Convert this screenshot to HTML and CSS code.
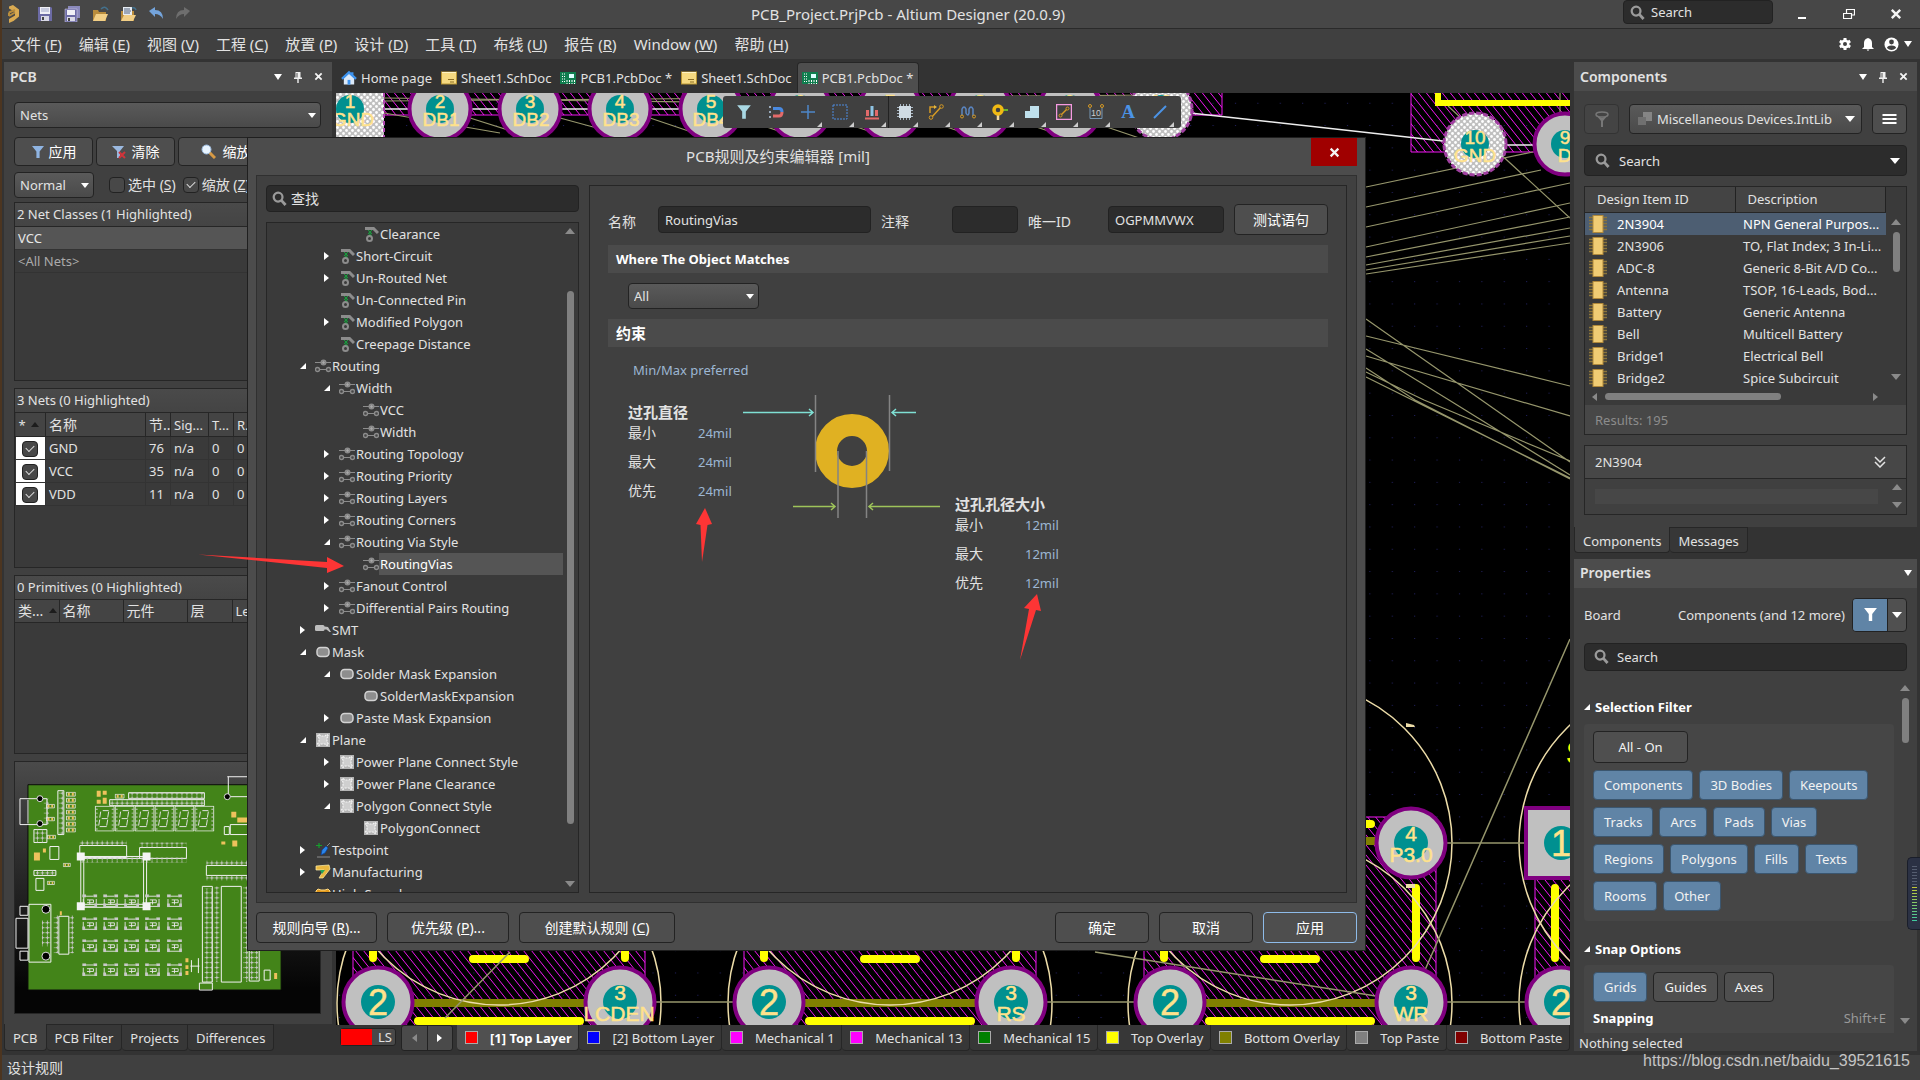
FILE: index.html
```html
<!DOCTYPE html>
<html lang="zh-CN">
<head>
<meta charset="utf-8">
<title>PCB_Project.PrjPcb - Altium Designer (20.0.9)</title>
<link rel="stylesheet" href="styles.css">
</head>
<body>
<svg class="sprite" aria-hidden="true">
  <symbol id="i-search" viewBox="0 0 16 16"><circle cx="6.5" cy="6.5" r="4.7" fill="none" stroke="#9a9a9a" stroke-width="2.4"/><path d="M10 10l4.5 5" stroke="#9a9a9a" stroke-width="3"/></symbol>
  <symbol id="i-funnel" viewBox="0 0 14 14"><path d="M1 1h12L8.600 6.500V13H5.400V6.500z" fill="currentColor"/></symbol>
  <symbol id="i-pin" viewBox="0 0 10 12"><path d="M2.500 1h5v5.500h1.500v1.500H5.700V12H4.300V8H1V6.500h1.500z" fill="#f0f0f0"/><path d="M4 2v4.500" stroke="#555"/></symbol>
  <symbol id="i-x" viewBox="0 0 10 10"><path d="M1.500 1.500l7 7M8.500 1.500l-7 7" stroke="#f4f4f4" stroke-width="2"/></symbol>
  <symbol id="i-clear" viewBox="0 0 16 16"><path d="M2 2.500h8.500L15 7" fill="none" stroke="#8c8c8c" stroke-width="3"/><path d="M5 4l4 4M9 4L5 8M5 7l4 3M9 7l-4 3" stroke="#16a03c" stroke-width="1"/><circle cx="6.500" cy="12.500" r="2.500" fill="none" stroke="#8c8c8c" stroke-width="2"/></symbol>
  <symbol id="i-route" viewBox="0 0 16 16"><path d="M0 4.500h16M2 11.500h12" stroke="#8c8c8c" stroke-width="1.200"/><g fill="#464646" stroke="#8c8c8c" stroke-width="1.400"><circle cx="8.500" cy="4.500" r="2.300"/><circle cx="2.500" cy="11.500" r="2"/><circle cx="13.500" cy="11.500" r="2"/></g><circle cx="8.500" cy="4.500" r="1.500" fill="#aaa"/></symbol>
  <symbol id="i-mask" viewBox="0 0 16 16"><rect x="2" y="3.500" width="12" height="9" rx="3.500" fill="#8e8e8e" stroke="#d2d2d2" stroke-width="1.500"/></symbol>
  <symbol id="i-plane" viewBox="0 0 16 16"><rect x="1" y="1" width="14" height="14" fill="#b4b4b4"/><path d="M4 2.500l2 1.500h4l2-1.500L13.500 4 12 6v4l1.500 2-1.500 1.500-2-1.500H6l-2 1.500L2.500 12 4 10V6L2.500 4z" fill="#cfcfcf" stroke="#f4f4f4" stroke-width="1.200" stroke-dasharray="2 1"/></symbol>
  <symbol id="i-smt" viewBox="0 0 16 16"><path d="M0 4.500q0-1.500 1.500-1.500H8q1.500 0 1.500 1.500L13 5l3 5h-1.500l-3-2.500H9.500q0 1.500-1.500 1.500H1.500Q0 9 0 8z" fill="#bdbdbd"/></symbol>
  <symbol id="i-test" viewBox="0 0 16 16"><path d="M4 1v5M1 3.500h6" stroke="#15a02c" stroke-width="1.200"/><path d="M6 13l1-5 4-4 2 2-3 5z" fill="#2a86ea" stroke="#0b3f9a" stroke-width=".7"/><path d="M2 15h13M12 4l3-3" stroke="#8b8b8b"/></symbol>
  <symbol id="i-manu" viewBox="0 0 16 16"><path d="M1 2l13-1 1 4-7 9H4l5-8H1z" fill="#e8b73f" stroke="#fff0ae" stroke-width=".7"/><path d="M5 6h5l-3 4z" fill="#23a55a"/></symbol>
  <symbol id="i-speed" viewBox="0 0 16 16"><path d="M1 5l2-2 3 1h4l3-1 2 2v8H1z" fill="#e39a1d" stroke="#ffd980"/></symbol>
  <symbol id="i-sch" viewBox="0 0 16 14"><rect x="0.500" y="1" width="15" height="12" fill="#f5d980" stroke="#b79432"/><path d="M1 1.500h14" stroke="#fff3c4"/><path d="M7 8.500h6M9 11h4" stroke="#8b6d22"/></symbol>
  <symbol id="i-pcb" viewBox="0 0 16 14"><rect x="0" y="1" width="16" height="12" fill="#0f7d4e"/><path d="M2 3h3M2 5.500h3M2 8h3M2 10.500h3" stroke="#fff" stroke-dasharray="1 1"/><rect x="9" y="3" width="5" height="4" fill="#dff"/><path d="M7 9v4M9.500 9v4M12 9v4M14.500 9v4" stroke="#fff" stroke-dasharray="2 1"/></symbol>
  <symbol id="i-chip" viewBox="0 0 18 18"><path d="M0 2.500h18M0 5.500h18M0 8.500h18M0 11.500h18M0 14.500h18" stroke="#8b743a" stroke-width="1.500"/><rect x="4" y="0.500" width="10" height="17" fill="#f0cc74" stroke="#b0883a"/></symbol>
  <symbol id="i-menu" viewBox="0 0 14 12"><path d="M0 2h14M0 6h14M0 10h14" stroke="#fff" stroke-width="2"/></symbol>
</svg>

<header class="titlebar">
  <div class="quick">
    <svg width="16" height="20" viewBox="0 0 16 20"><path d="M3 4.500V2.500l4-1.500 6 4.500v7L7.500 17 3 19v-4l6-3.500V8L6.500 6.500z" fill="#d9aa52"/><path d="M3 8.500L9 6M3 12l6-3.500M3 8.500V12" fill="none" stroke="#b98d3c" stroke-width="2"/></svg>
    <svg width="16" height="16" viewBox="0 0 16 16"><path d="M1 1h13l1 1v13H1z" fill="#6c6ba5"/><path d="M3 1h10v7H3z" fill="#f0f0f6"/><path d="M4 10h8v5H4z" fill="#d9d9e6"/><path d="M5 11h2v3H5z" fill="#444"/><path d="M4 3h8M4 5h8" stroke="#9fa6c9"/></svg>
    <svg width="17" height="16" viewBox="0 0 17 16"><path d="M4 0h12v12H4z" fill="#8a89bb"/><path d="M1 3h12v13H1z" fill="#6c6ba5" stroke="#d4d3ee" stroke-width=".5"/><path d="M3 4h8v5H3z" fill="#f0f0f6"/><path d="M3 11h8v4H3z" fill="#d9d9e6"/><path d="M4 12h2v3H4z" fill="#444"/></svg>
    <svg width="17" height="16" viewBox="0 0 17 16"><path d="M1 4h5l1 2h7v9H1z" fill="#b98c3c"/><path d="M4 8h12l-3 7H1z" fill="#f2cf86"/><path d="M9 3q4-4 7 1" fill="none" stroke="#43708c" stroke-width="1.500"/></svg>
    <svg width="17" height="16" viewBox="0 0 17 16"><path d="M1 5h13v10H1z" fill="#b98c3c"/><path d="M3 1h9v8H3z" fill="#e8edf4"/><path d="M4 3h6M4 5h7M4 7h6" stroke="#53637c"/><path d="M4 9h12l-3 6H1z" fill="#f2cf86"/><path d="M12 2q3-1 4 2" fill="none" stroke="#43708c" stroke-width="1.500"/></svg>
    <svg width="16" height="16" viewBox="0 0 16 16"><path d="M1 5l6-4v3q8 0 8 9-3-5-8-5v3z" fill="#74a4dc"/></svg>
    <svg width="16" height="16" viewBox="0 0 16 16"><path d="M15 5L9 1v3Q1 4 1 13q3-5 8-5v3z" fill="#6e6e6e"/></svg>
  </div>
  <h1>PCB_Project.PrjPcb - Altium Designer (20.0.9)</h1>
  <div class="win">
    <label class="field top-search"><svg width="15" height="15"><use href="#i-search"/></svg><input type="text" value="Search" aria-label="Search"></label>
    <button class="bare" aria-label="Minimize"><svg width="12" height="12" viewBox="0 0 12 12"><path d="M2 10h8" stroke="#fff" stroke-width="2"/></svg></button>
    <button class="bare" aria-label="Restore"><svg width="12" height="12" viewBox="0 0 12 12"><path d="M3.500 5V1.500h8V7H8.500M.500 5.500h8v5h-8z" fill="none" stroke="#fff" stroke-width="1.200"/></svg></button>
    <button class="bare" aria-label="Close"><svg width="12" height="12"><use href="#i-x"/></svg></button>
  </div>
</header>

<nav class="menubar">
  <a href="#">文件 (<u>F</u>)</a><a href="#">编辑 (<u>E</u>)</a><a href="#">视图 (<u>V</u>)</a><a href="#">工程 (<u>C</u>)</a><a href="#">放置 (<u>P</u>)</a><a href="#">设计 (<u>D</u>)</a><a href="#">工具 (<u>T</u>)</a><a href="#">布线 (<u>U</u>)</a><a href="#">报告 (<u>R</u>)</a><a href="#">Window (<u>W</u>)</a><a href="#">帮助 (<u>H</u>)</a>
  <div class="account">
    <svg width="14" height="14" viewBox="0 0 14 14"><path d="M7 1v12M1.800 4l10.400 6M12.200 4L1.800 10" stroke="#fff" stroke-width="3"/><circle cx="7" cy="7" r="4.500" fill="#fff"/><circle cx="7" cy="7" r="2" fill="#404040"/></svg>
    <svg width="12" height="14" viewBox="0 0 12 14"><path d="M6 1q4 1 4 5v4l2 2H0l2-2V6q0-4 4-5zM4.500 12.500h3L6 14z" fill="#fff"/></svg>
    <span class="user"><svg width="15" height="15" viewBox="0 0 15 15"><circle cx="7.500" cy="7.500" r="7" fill="#fff"/><circle cx="7.500" cy="5" r="2.400" fill="#404040"/><path d="M3 11q0-2.500 4.500-2.500T12 11q-2 2-4.500 2T3 11z" fill="#404040"/></svg><i class="caret small"></i></span>
  </div>
</nav>

<main class="workspace">
  <aside class="left">
    <section class="panel pcb-panel">
      <header class="panel-head"><h2>PCB</h2><i class="caret small"></i><svg width="10" height="12"><use href="#i-pin"/></svg><svg width="9" height="9"><use href="#i-x"/></svg></header>
      <div class="pcb-body">
        <span class="select"><select aria-label="Mode"><option>Nets</option></select></span>
        <div class="actions zh">
          <button class="btn"><svg class="blue" width="14" height="14"><use href="#i-funnel"/></svg>应用</button>
          <button class="btn"><svg width="16" height="14" viewBox="0 0 16 14"><path d="M0 1h12L8 6v7H5V6z" fill="#9bb9e0"/><path d="M7 7l6 6M13 7l-6 6" stroke="#d0343a" stroke-width="2"/></svg>清除</button>
          <button class="btn wide"><svg width="15" height="15" viewBox="0 0 15 15"><path d="M8 8l6 6" stroke="#d79a45" stroke-width="3"/><circle cx="5.500" cy="5.500" r="4.500" fill="#e8f4ff" stroke="#9bbbe0"/></svg>缩放等级</button>
        </div>
        <div class="options zh">
          <span class="select normal"><select aria-label="Highlight"><option>Normal</option></select></span>
          <label><input type="checkbox"><span>选中 (<u>S</u>)</span></label>
          <label><input type="checkbox" checked><span>缩放 (<u>Z</u>)</span></label>
        </div>
        <section class="box">
          <h3>2 Net Classes (1 Highlighted)</h3>
          <ul class="classes"><li class="on">VCC</li><li>&lt;All Nets&gt;</li></ul>
        </section>
        <section class="box">
          <h3>3 Nets (0 Highlighted)</h3>
          <table class="grid nets">
            <colgroup><col class="c29"><col class="c100"><col class="c25"><col class="c38"><col class="c25"><col></colgroup>
            <thead><tr><th>* <i class="sort"></i></th><th class="zh">名称</th><th class="zh">节..</th><th>Sig...</th><th>T...</th><th>R...</th></tr></thead>
            <tbody>
              <tr><td class="tick"><input type="checkbox" checked aria-label="GND"></td><td>GND</td><td>76</td><td>n/a</td><td>0</td><td>0</td></tr>
              <tr><td class="tick"><input type="checkbox" checked aria-label="VCC"></td><td>VCC</td><td>35</td><td>n/a</td><td>0</td><td>0</td></tr>
              <tr><td class="tick"><input type="checkbox" checked aria-label="VDD"></td><td>VDD</td><td>11</td><td>n/a</td><td>0</td><td>0</td></tr>
            </tbody>
          </table>
        </section>
        <section class="box">
          <h3>0 Primitives (0 Highlighted)</h3>
          <table class="grid zh">
            <colgroup><col class="c44"><col class="c64"><col class="c64"><col class="c45"><col></colgroup>
            <thead><tr><th>类... <i class="sort"></i></th><th>名称</th><th>元件</th><th>层</th><th class="en">Length</th></tr></thead>
          </table>
        </section>
        <div class="box minimap">
          <svg viewBox="15 761 306 252" preserveAspectRatio="xMidYMid slice">
            <defs>
              <pattern id="m-pin" width="5" height="5" patternUnits="userSpaceOnUse"><path d="M2.500 .500v4M.500 2.500h4" stroke="#c9c9c9" stroke-width="1"/></pattern>
              <symbol id="m-key" viewBox="0 0 16 14"><path d="M1 5v8h14V5M4 2h8M5 6h7v3H5M8 6v5" fill="none" stroke="#e6e6e6"/><path d="M0 0h4v3H0zM12 0h4v3h-4zM0 10h3v4H0zM13 10h3v4h-3z" fill="#c9c9c9"/></symbol>
              <symbol id="m-seg" viewBox="0 0 20 26"><path d="M.500 .500h19v25H.500z" fill="none" stroke="#f2f2f2"/><path d="M8 5h6M7 13h6M5 21h7M6 6l-1 6M14 6l-1 6M5 14l-1 6M13 14l-1 6" stroke="#e2e2e2" fill="none"/><path d="M2 3v21M18 3v21" stroke="#c9c9c9" stroke-dasharray="1 3" stroke-width="2"/></symbol>
              <symbol id="m-res" viewBox="0 0 10 5"><path d="M.500 .500h9v4h-9z" fill="none" stroke="#e6e6e6"/><path d="M2 1h2v3H2zM6 1h2v3H6z" fill="#eec25c"/></symbol>
            </defs>
            <path d="M28 784h254v206H28z" fill="#438419" stroke="#0a0a0a"/>
            <g fill="none" stroke="#f2f2f2" stroke-width="1">
              <path d="M36 798H20v26M20 824h16M28 799v24M36 798h11v26H36M228 776h40v60M229 776v20h40"/>
              <path d="M20 906h8v9h-8zM16 918h12v30H16zM20 951h8v9h-8zM29 904h22v58H29zM59 916h10v38H59zM58 790h6v44h-6z" />
              <path d="M80 845h47v12H80zM140 847h47v11h-47zM207 865h45v10h-45zM36 878h8v12h-8zM50 846h9v13h-9zM34 829h13v13H34zM34 870h22v5H34z"/>
              <path d="M81 856h66v51H81zM84 858h60v46H84zM203 886h10v96h-10zM222 886h20v96h-20zM250 886h10v95h-10zM200 983h13v7h-13zM129 792h76v6h-76zM110 799h95v6h-95zM231 824h30v10h-30zM225 826h5v8h-5z"/>
              <path d="M192 960v12M199 958v15M191 966h9M265 970h6v10h-6z"/>
            </g>
            <g fill="url(#m-pin)"><path d="M59 790h5v44h-5zM129 792h76v6h-76zM110 799h95v6h-95zM80 840h47v5H80zM80 857h60v5H80zM140 842h47v5h-47zM140 857h47v5h-47zM207 860h45v5h-45zM207 875h45v5h-45zM205 888h8v94h-8zM215 886h5v96h-5zM244 886h5v96h-5zM251 886h8v94h-8zM54 915h5v38h-5zM69 915h5v38h-5zM42 920h9v26h-9zM34 829h13v13H34zM36 870h20v5H36zM44 798h5v26h-5z"/></g>
            <g fill="#eec25c"><path d="M97 790h4v6h-4zM103 790h4v4h-4zM97 799h4v4h-4zM103 797h4v6h-4zM34 852h6v8h-6zM43 848h3v4h-3zM232 811h5v6h-5zM238 817h10v5h-10zM186 958h3v4h-3zM186 965h3v4h-3zM186 971h3v4h-3zM275 973h3v6h-3zM222 841h4v3h-4zM233 840h5v6h-5zM60 911h2v4h-2z"/></g>
            <g><use href="#m-res" x="66" y="791" width="10" height="5"/><use href="#m-res" x="66" y="797" width="10" height="5"/><use href="#m-res" x="66" y="803" width="10" height="5"/><use href="#m-res" x="66" y="809" width="10" height="5"/><use href="#m-res" x="66" y="815" width="10" height="5"/><use href="#m-res" x="66" y="821" width="10" height="5"/><use href="#m-res" x="66" y="827" width="10" height="5"/><use href="#m-res" x="115" y="793" width="10" height="5"/><use href="#m-res" x="46" y="803" width="9" height="5"/><use href="#m-res" x="46" y="816" width="9" height="5"/><use href="#m-res" x="47" y="834" width="9" height="5"/><use href="#m-res" x="47" y="880" width="8" height="5"/><use href="#m-res" x="63" y="862" width="8" height="5"/></g>
            <g><use href="#m-seg" x="95" y="805" width="20" height="26"/><use href="#m-seg" x="115" y="805" width="20" height="26"/><use href="#m-seg" x="135" y="805" width="20" height="26"/><use href="#m-seg" x="155" y="805" width="20" height="26"/><use href="#m-seg" x="175" y="805" width="20" height="26"/><use href="#m-seg" x="195" y="805" width="20" height="26"/></g>
            <g id="m-row"><use href="#m-key" x="82" y="894" width="16" height="13"/><use href="#m-key" x="103" y="894" width="16" height="13"/><use href="#m-key" x="124" y="894" width="16" height="13"/><use href="#m-key" x="145" y="894" width="16" height="13"/><use href="#m-key" x="167" y="894" width="16" height="13"/></g>
            <use href="#m-row" y="23"/><use href="#m-row" y="45"/><use href="#m-row" y="69"/>
            <path d="M77 852h8v8h-8zM143 852h8v8h-8zM77 902h8v8h-8zM143 902h8v8h-8z" fill="#f4f4f4"/>
            <g fill="#000" stroke="#ddd"><circle cx="40" cy="798" r="3"/><circle cx="40" cy="823" r="3"/><circle cx="46" cy="909" r="4"/><circle cx="46" cy="956" r="4"/><circle cx="228" cy="796" r="3"/></g>
          </svg>
        </div>
      </div>
    </section>
    <nav class="tabs"><a class="on" href="#">PCB</a><a href="#">PCB Filter</a><a href="#">Projects</a><a href="#">Differences</a></nav>
  </aside>

  <section class="center">
    <nav class="docs">
      <a href="#"><svg width="16" height="16" viewBox="0 0 17 16"><path d="M3 8v7h11V8L8.500 3z" fill="#dce9f8"/><path d="M1 9l7.500-7L16 9M12 2v3" fill="none" stroke="#3d93ee" stroke-width="2.500"/><path d="M7 10h3v5H7z" fill="#3d93ee"/></svg>Home page</a>
      <a href="#"><svg width="16" height="14"><use href="#i-sch"/></svg>Sheet1.SchDoc</a>
      <a href="#"><svg width="16" height="14"><use href="#i-pcb"/></svg>PCB1.PcbDoc *</a>
      <a href="#"><svg width="16" height="14"><use href="#i-sch"/></svg>Sheet1.SchDoc</a>
      <a href="#" class="on"><svg width="16" height="14"><use href="#i-pcb"/></svg>PCB1.PcbDoc *</a>
    </nav>
    <div class="canvas">
      <svg class="board" viewBox="336 93 1234 932" preserveAspectRatio="xMinYMin slice">
        <defs>
          <pattern id="hatch" width="8" height="10" patternUnits="userSpaceOnUse"><path d="M-1 -1.250L9 11.250M-5 3.750L1 11.250M7 -1.250L13 6.250" stroke="#f016f0" stroke-width="1"/></pattern>
          <pattern id="dots" width="22.400" height="22.300" patternUnits="userSpaceOnUse"><path d="M3 14h1" stroke="#24246a"/></pattern>
          <pattern id="check" width="6" height="6" patternUnits="userSpaceOnUse"><path d="M0 0h6v6H0z" fill="#c0c0c0"/><circle cx="1.500" cy="1.500" r="1.400" fill="#fff"/><circle cx="4.500" cy="4.500" r="1.400" fill="#fff"/></pattern>
          <g id="pad"><circle r="30.500" fill="#c0c0c0" stroke="#800080" stroke-width="4"/><circle r="14" fill="#009090"/></g>
          <g id="padc"><circle r="31" fill="url(#check)" stroke="#a040a0" stroke-width="3" stroke-dasharray="5 2"/><circle r="14" fill="#009090"/></g>
          <g id="padb"><circle r="34.500" fill="#c0c0c0" stroke="#800080" stroke-width="4"/><circle r="17" fill="#009090"/></g>
          <g id="module">
            <path d="M-146 817h292v220h-292z" fill="url(#hatch)" stroke="#f016f0"/>
            <path d="M-85 1003H85M-85 841H85" stroke="#808000" stroke-width="8" stroke-linecap="round"/>
            <path d="M-81 1021H81M-81 824H81M-26 959h52M-126 888v70M126 888v70" stroke="#ff0" stroke-width="8" stroke-linecap="round"/>
            <g fill="none" stroke="#ecdca8" stroke-width="1.500"><circle cy="843" r="162"/><circle cy="1003" r="162"/></g>
          </g>
        </defs>
        <path d="M336 93h1234v932H336z" fill="#000"/><path d="M336 93h1234v932H336z" fill="url(#dots)"/>
        <path d="M384 80h838v35H384zM1411 80h200v72h-200z" fill="url(#hatch)" stroke="#f016f0"/>
        <g stroke="#96966c" stroke-width="1.200" fill="none">
          <path d="M384 98L1150 108M384 101L1150 95M384 113L500 133M470 118L530 137M560 118L630 137M650 118l80 27M740 118l80 27M830 118l80 27M920 118l80 27M1010 118l80 27M1080 118l80 27"/>
          <path d="M1366 187L1533 152M1366 207L1541 170M1366 227L1570 183M1366 247L1570 203M1366 257L1570 217M1366 265L1570 228M1366 270L1570 236M1366 274L1570 243M1448 106L1570 218M1560 93v20"/>
          <path d="M1366 319L1570 462M1366 336L1570 386M1366 356L1570 416M1366 349L1449 400 1570 475M1366 368L1415 400 1570 479M1366 372L1424 400 1570 461M1366 377L1570 478"/>
        </g>
        <path d="M384 109H760M1190 113L1443 141M1507 145h30" stroke="#eee" stroke-width="1.500"/>
        <path d="M1438 93v10h132" fill="none" stroke="#ff0" stroke-width="6"/>
        <path d="M336 93h48v50h-48z" fill="url(#check)"/><path d="M384 93v50" stroke="#b04ab0" stroke-width="2" stroke-dasharray="4 3"/><circle cx="350" cy="109" r="14" fill="#009090"/>
        <use href="#pad" x="440" y="109"/><use href="#pad" x="530" y="109"/><use href="#pad" x="620" y="109"/><use href="#pad" x="711" y="109"/><use href="#pad" x="800" y="109"/><use href="#pad" x="890" y="109"/><use href="#pad" x="980" y="109"/><use href="#pad" x="1070" y="109"/><use href="#padc" x="1161" y="109"/><use href="#padc" x="1475" y="144"/><use href="#pad" x="1565" y="144"/>
        <g class="pad-s"><text x="350" y="108">1</text><text x="353" y="126">GND</text><text x="440" y="108">2</text><text x="441" y="126">DB1</text><text x="530" y="108">3</text><text x="531" y="126">DB2</text><text x="620" y="108">4</text><text x="621" y="126">DB3</text><text x="711" y="108">5</text><text x="711" y="126">DB4</text><text x="800" y="108">6</text><text x="890" y="108">7</text><text x="980" y="108">8</text><text x="1070" y="108">9</text><text x="1161" y="108">10</text><text x="1475" y="144">10</text><text x="1475" y="162">GND</text><text x="1565" y="144">9</text><text x="1570" y="162">D7</text></g>
        <use href="#module" x="499"/><use href="#module" x="890"/><use href="#module" x="1290"/><use href="#module" x="1681"/>
        <g stroke="#96966c" stroke-width="1.500" fill="none"><path d="M1570 639L1425 970M1095 952L1376 996M510 952L445 1018M654 1002h80M1045 1002h90M1445 1002h82M1445 843h82"/></g>
        <path d="M1406 723l8 2 1 2h-9zM1406 884h9v4h-9z" fill="#ecdca8"/>
        <use href="#padb" x="378" y="1002"/><use href="#padb" x="620" y="1002"/><use href="#padb" x="769" y="1002"/><use href="#padb" x="1011" y="1002"/><use href="#padb" x="1170" y="1002"/><use href="#padb" x="1411" y="1002"/><use href="#padb" x="1561" y="1002"/><use href="#padb" x="1411" y="843"/>
        <path d="M1526 808h70v70h-70z" fill="#c0c0c0" stroke="#800080" stroke-width="4"/><circle cx="1561" cy="843" r="17" fill="#009090"/>
        <g class="pad-l"><text x="378" y="1015">2</text><text x="769" y="1015">2</text><text x="1170" y="1015">2</text><text x="1561" y="1015">2</text><text x="1561" y="856">1</text></g>
        <g class="pad-m"><text x="620" y="1000">3</text><text x="619" y="1021">LCDEN</text><text x="1011" y="1000">3</text><text x="1011" y="1021">RS</text><text x="1411" y="1000">3</text><text x="1411" y="1021">WR</text><text x="1411" y="841">4</text><text x="1411" y="862">P3.0</text></g>
        <text class="pad-y" x="1566" y="764">S</text>
      </svg>
      <div class="tools" role="toolbar">
        <button><svg class="ice" viewBox="0 0 16 16"><use href="#i-funnel"/></svg></button>
        <button><svg viewBox="0 0 16 16"><path d="M1 3h2M1 8h2M1 13h2" stroke="#9ab" stroke-width="2"/><path d="M5 4.500h6q3 0 3 3.500" stroke="#4a8ae0" stroke-width="3" fill="none"/><path d="M14 8q0 4-3 4H5" stroke="#e26a6a" stroke-width="3" fill="none"/></svg></button>
        <button class="more"><svg viewBox="0 0 16 16"><path d="M8 1v14M1 8h14" stroke="#4d86c8" stroke-width="1.500"/></svg></button>
        <button class="more"><svg viewBox="0 0 16 16"><path d="M1 1h14v14H1z" fill="none" stroke="#4d8be0" stroke-dasharray="2 1"/></svg></button>
        <button class="more"><svg viewBox="0 0 16 16"><path d="M2 6h3v6H2zM11 6h3v6h-3z" fill="#e26a6a"/><path d="M6.500 2h3v10h-3z" fill="#8fc4e4"/><path d="M1 14.500h14" stroke="#e26a6a" stroke-width="2"/></svg></button>
        <button class="more bar"><svg viewBox="0 0 16 16"><path d="M0 3.500h16M0 6.500h16M0 9.500h16M0 12.500h16M3.500 0v16M6.500 0v16M9.500 0v16M12.500 0v16" stroke="#a9b7c3"/><path d="M2 2h12v12H2z" fill="#cfdbe4"/></svg></button>
        <button class="more"><svg viewBox="0 0 16 16"><path d="M2 9V3h5M3 14L13 3" fill="none" stroke="#d59a25" stroke-width="1.500"/><path d="M6 1l3 2-3 2z" fill="#e6b63c"/><circle cx="3" cy="13.500" r="1.800" fill="#404040" stroke="#d59a25"/><circle cx="13.500" cy="2.500" r="1.800" fill="#404040" stroke="#d59a25"/></svg></button>
        <button class="more"><svg viewBox="0 0 16 16"><path d="M2 12V5q2-4 4 0v4q2 4 3 0V5q2-4 4 0v7" fill="none" stroke="#5b86c2" stroke-width="1.500"/><circle cx="2" cy="12.500" r="1.500" fill="#404040" stroke="#d59a25"/><circle cx="14" cy="12.500" r="1.500" fill="#404040" stroke="#d59a25"/></svg></button>
        <button class="more"><svg viewBox="0 0 16 16"><path d="M10 6h6" stroke="#69b52c" stroke-width="2"/><path d="M6 10v6" stroke="#f3d9a0" stroke-width="2.500"/><circle cx="6" cy="6" r="4" fill="#404040" stroke="#f0b913" stroke-width="3.500"/></svg></button>
        <button class="more"><svg viewBox="0 0 16 16"><path d="M1 7h5V2h9v12H1z" fill="#bfe0ec"/></svg></button>
        <button class="more"><svg viewBox="0 0 16 16"><path d="M.500 .500h15v15H.500z" fill="none" stroke="#f59ae0" stroke-width="1.500"/><path d="M4 12l8-8" stroke="#d59a25" stroke-width="1.500"/><circle cx="4.500" cy="11.500" r="1.500" fill="#404040" stroke="#d59a25"/><circle cx="11.500" cy="4.500" r="1.500" fill="#404040" stroke="#d59a25"/></svg></button>
        <button class="more"><svg viewBox="0 0 16 16"><path d="M2 4v10.500h12V4" fill="none" stroke="#7596b4"/><circle cx="2" cy="2" r="1.500" fill="none" stroke="#d59a25"/><circle cx="14" cy="2" r="1.500" fill="none" stroke="#d59a25"/><text x="8" y="12" class="ten">10</text></svg></button>
        <button><span class="letter">A</span></button>
        <button class="more"><svg viewBox="0 0 16 16"><path d="M2 14L14 2" stroke="#4b93e6" stroke-width="2"/></svg></button>
      </div>
    </div>
    <nav class="layers">
      <button class="ls"><i></i>LS</button>
      <span class="steps"><button aria-label="Previous"><i class="arrow back"></i></button><button aria-label="Next"><i class="arrow"></i></button></span>
      <a href="#" class="on"><i class="sw red"></i>[1] Top Layer</a>
      <a href="#"><i class="sw blu"></i>[2] Bottom Layer</a>
      <a href="#"><i class="sw mag"></i>Mechanical 1</a>
      <a href="#"><i class="sw mag"></i>Mechanical 13</a>
      <a href="#"><i class="sw grn"></i>Mechanical 15</a>
      <a href="#"><i class="sw yel"></i>Top Overlay</a>
      <a href="#"><i class="sw olv"></i>Bottom Overlay</a>
      <a href="#"><i class="sw gry"></i>Top Paste</a>
      <a href="#"><i class="sw mar"></i>Bottom Paste</a>
    </nav>
  </section>

  <aside class="right">
    <section class="panel">
      <header class="panel-head"><h2>Components</h2><i class="caret small"></i><svg width="10" height="12"><use href="#i-pin"/></svg><svg width="9" height="9"><use href="#i-x"/></svg></header>
      <div class="comp-body">
        <div class="lib">
          <button class="btn dim" aria-label="Filter"><svg width="16" height="16" viewBox="0 0 16 16"><ellipse cx="8" cy="3.500" rx="6" ry="2.500" fill="none" stroke="#777" stroke-width="1.500"/><path d="M2 4l5 6v6h2v-6l5-6-6 3z" fill="#777"/></svg></button>
          <span class="select lib-select"><svg width="14" height="14" viewBox="0 0 14 14"><path d="M5 0h9v9H5z" fill="#858585"/><path d="M0 5h8v8H0z" fill="#707070"/></svg><select aria-label="Library"><option>Miscellaneous Devices.IntLib</option></select></span>
          <button class="btn" aria-label="Menu"><svg width="15" height="12"><use href="#i-menu"/></svg></button>
        </div>
        <label class="field big"><svg width="15" height="15"><use href="#i-search"/></svg><input type="text" value="Search" aria-label="Search components"><i class="caret"></i></label>
        <div class="list">
          <table class="parts">
            <colgroup><col class="c150"><col></colgroup>
            <thead><tr><th>Design Item ID</th><th>Description</th></tr></thead>
            <tbody>
              <tr class="on"><td><svg><use href="#i-chip"/></svg>2N3904</td><td>NPN General Purpos...</td></tr>
              <tr><td><svg><use href="#i-chip"/></svg>2N3906</td><td>TO, Flat Index; 3 In-Li...</td></tr>
              <tr><td><svg><use href="#i-chip"/></svg>ADC-8</td><td>Generic 8-Bit A/D Co...</td></tr>
              <tr><td><svg><use href="#i-chip"/></svg>Antenna</td><td>TSOP, 16-Leads, Bod...</td></tr>
              <tr><td><svg><use href="#i-chip"/></svg>Battery</td><td>Generic Antenna</td></tr>
              <tr><td><svg><use href="#i-chip"/></svg>Bell</td><td>Multicell Battery</td></tr>
              <tr><td><svg><use href="#i-chip"/></svg>Bridge1</td><td>Electrical Bell</td></tr>
              <tr><td><svg><use href="#i-chip"/></svg>Bridge2</td><td>Spice Subcircuit</td></tr>
            </tbody>
          </table>
          <div class="vbar"><i class="up"></i><b></b><i class="down"></i></div>
          <div class="hbar"><i class="arrow back"></i><b></b><i class="arrow"></i></div>
        </div>
        <p class="results">Results: 195</p>
        <div class="detail">
          <p>2N3904<svg width="12" height="12" viewBox="0 0 12 12"><path d="M1 1l5 5 5-5M1 6l5 5 5-5" fill="none" stroke="#e4e4e4" stroke-width="1.500"/></svg></p>
          <div class="preview"><b></b><span><i class="up"></i><i class="down"></i></span></div>
        </div>
      </div>
    </section>
    <nav class="tabs"><a class="on" href="#">Components</a><a href="#">Messages</a></nav>
    <section class="panel props">
      <header class="panel-head"><h2>Properties</h2><i class="caret small"></i></header>
      <div class="props-body">
        <div class="board-row"><span>Board</span><span>Components (and 12 more)</span><div class="split"><button aria-label="Filter"><svg width="15" height="15"><use href="#i-funnel"/></svg></button><button aria-label="More"><i class="caret"></i></button></div></div>
        <label class="field"><svg width="15" height="15"><use href="#i-search"/></svg><input type="text" value="Search" aria-label="Search properties"></label>
        <div class="scroll">
          <div class="groups">
            <h3><i class="open"></i>Selection Filter</h3>
            <div class="group">
              <div><button class="chip off allon">All - On</button></div>
              <div><button class="chip">Components</button><button class="chip">3D Bodies</button><button class="chip">Keepouts</button></div>
              <div><button class="chip">Tracks</button><button class="chip">Arcs</button><button class="chip">Pads</button><button class="chip">Vias</button></div>
              <div><button class="chip">Regions</button><button class="chip">Polygons</button><button class="chip">Fills</button><button class="chip">Texts</button></div>
              <div><button class="chip">Rooms</button><button class="chip">Other</button></div>
            </div>
            <h3 class="snap"><i class="open"></i>Snap Options</h3>
            <div class="group last">
              <div><button class="chip">Grids</button><button class="chip off">Guides</button><button class="chip off">Axes</button></div>
              <p><b>Snapping</b><span>Shift+E</span></p>
            </div>
          </div>
          <div class="vbar"><i class="up"></i><b></b><i class="down"></i></div>
        </div>
        <p class="nothing">Nothing selected</p>
      </div>
    </section>
  </aside>
</main>

<footer class="status zh">设计规则</footer>

<div class="dialog" role="dialog" aria-labelledby="dlg-title">
  <header><h2 id="dlg-title">PCB规则及约束编辑器 [mil]</h2><button class="close" aria-label="Close"><svg width="11" height="11"><use href="#i-x"/></svg></button></header>
  <div class="dialog-main">
    <div class="tree-col">
      <label class="field zh"><svg width="15" height="15"><use href="#i-search"/></svg><input type="text" value="查找" aria-label="查找"></label>
      <div class="tree-box">
        <ul class="tree">
          <li class="l3"><i></i><svg><use href="#i-clear"/></svg><span>Clearance</span></li>
          <li class="l2"><i class="arrow"></i><svg><use href="#i-clear"/></svg><span>Short-Circuit</span></li>
          <li class="l2"><i class="arrow"></i><svg><use href="#i-clear"/></svg><span>Un-Routed Net</span></li>
          <li class="l2"><i></i><svg><use href="#i-clear"/></svg><span>Un-Connected Pin</span></li>
          <li class="l2"><i class="arrow"></i><svg><use href="#i-clear"/></svg><span>Modified Polygon</span></li>
          <li class="l2"><i></i><svg><use href="#i-clear"/></svg><span>Creepage Distance</span></li>
          <li class="l1"><i class="open"></i><svg><use href="#i-route"/></svg><span>Routing</span></li>
          <li class="l2"><i class="open"></i><svg><use href="#i-route"/></svg><span>Width</span></li>
          <li class="l3"><i></i><svg><use href="#i-route"/></svg><span>VCC</span></li>
          <li class="l3"><i></i><svg><use href="#i-route"/></svg><span>Width</span></li>
          <li class="l2"><i class="arrow"></i><svg><use href="#i-route"/></svg><span>Routing Topology</span></li>
          <li class="l2"><i class="arrow"></i><svg><use href="#i-route"/></svg><span>Routing Priority</span></li>
          <li class="l2"><i class="arrow"></i><svg><use href="#i-route"/></svg><span>Routing Layers</span></li>
          <li class="l2"><i class="arrow"></i><svg><use href="#i-route"/></svg><span>Routing Corners</span></li>
          <li class="l2"><i class="open"></i><svg><use href="#i-route"/></svg><span>Routing Via Style</span></li>
          <li class="l3 on"><i></i><svg><use href="#i-route"/></svg><span>RoutingVias</span></li>
          <li class="l2"><i class="arrow"></i><svg><use href="#i-route"/></svg><span>Fanout Control</span></li>
          <li class="l2"><i class="arrow"></i><svg><use href="#i-route"/></svg><span>Differential Pairs Routing</span></li>
          <li class="l1"><i class="arrow"></i><svg><use href="#i-smt"/></svg><span>SMT</span></li>
          <li class="l1"><i class="open"></i><svg><use href="#i-mask"/></svg><span>Mask</span></li>
          <li class="l2"><i class="open"></i><svg><use href="#i-mask"/></svg><span>Solder Mask Expansion</span></li>
          <li class="l3"><i></i><svg><use href="#i-mask"/></svg><span>SolderMaskExpansion</span></li>
          <li class="l2"><i class="arrow"></i><svg><use href="#i-mask"/></svg><span>Paste Mask Expansion</span></li>
          <li class="l1"><i class="open"></i><svg><use href="#i-plane"/></svg><span>Plane</span></li>
          <li class="l2"><i class="arrow"></i><svg><use href="#i-plane"/></svg><span>Power Plane Connect Style</span></li>
          <li class="l2"><i class="arrow"></i><svg><use href="#i-plane"/></svg><span>Power Plane Clearance</span></li>
          <li class="l2"><i class="open"></i><svg><use href="#i-plane"/></svg><span>Polygon Connect Style</span></li>
          <li class="l3"><i></i><svg><use href="#i-plane"/></svg><span>PolygonConnect</span></li>
          <li class="l1"><i class="arrow"></i><svg><use href="#i-test"/></svg><span>Testpoint</span></li>
          <li class="l1"><i class="arrow"></i><svg><use href="#i-manu"/></svg><span>Manufacturing</span></li>
          <li class="l1"><i></i><svg><use href="#i-speed"/></svg><span>High Speed</span></li>
        </ul>
        <div class="vbar"><i class="up"></i><b></b><i class="down"></i></div>
      </div>
    </div>
    <div class="rule">
      <div class="rule-row">
        <label class="zh w50" for="r-name">名称</label><input class="w213" id="r-name" type="text" value="RoutingVias">
        <label class="zh w81" for="r-note">注释</label><input class="w66" id="r-note" type="text">
        <label class="zh w90" for="r-id">唯一ID</label><input class="w116" id="r-id" type="text" value="OGPMMVWX">
        <button class="btn zh test">测试语句</button>
      </div>
      <h3>Where The Object Matches</h3>
      <span class="select all"><select aria-label="Scope"><option>All</option></select></span>
      <h3 class="zh">约束</h3>
      <div class="constraint">
        <a class="pref" href="#">Min/Max preferred</a>
        <div class="via">
          <dl class="zh dia"><dt class="cap">过孔直径</dt><dt>最小</dt><dd>24mil</dd><dt>最大</dt><dd>24mil</dd><dt>优先</dt><dd>24mil</dd></dl>
          <svg width="200" height="130" viewBox="741 390 200 130">
            <circle cx="851" cy="450" r="26" fill="none" stroke="#e0b122" stroke-width="22"/>
            <path d="M814.500 394v77M888.500 394v76M837 450v67M865.500 450v67" stroke="#848484" stroke-width="1.500"/>
            <path d="M742 411.500h70M808 408l4 3.500-4 3.500M915 411.500h-24M895 408l-4 3.500 4 3.500" fill="none" stroke="#7fe0d4" stroke-width="1.500"/>
            <path d="M792 505.500h42M830 502l4 3.500-4 3.500M939 505.500h-71M872 502l-4 3.500 4 3.500" fill="none" stroke="#9ec45a" stroke-width="1.500"/>
          </svg>
          <dl class="zh hole"><dt class="cap">过孔孔径大小</dt><dt>最小</dt><dd>12mil</dd><dt>最大</dt><dd>12mil</dd><dt>优先</dt><dd>12mil</dd></dl>
        </div>
      </div>
    </div>
  </div>
  <footer class="zh">
    <button class="btn w121">规则向导 (<u>R</u>)...</button><button class="btn w122">优先级 (<u>P</u>)...</button><button class="btn w156">创建默认规则 (<u>C</u>)</button>
    <span class="push"></span>
    <button class="btn w94">确定</button><button class="btn w94">取消</button><button class="btn w94 primary">应用</button>
  </footer>
</div>

<svg class="marks" viewBox="0 0 1920 1080" preserveAspectRatio="xMinYMin meet" aria-hidden="true"><path d="M198 554.500L327 562v-5l17 9-17 7v-5zM705 508l7 16-4.500 1-5.500 37-1.500-37-4.500-1zM1037 594l4 17-5-1-16 50 9-51-5-1z" fill="#fd3535"/></svg>
<div class="meter"><b></b></div>
<a class="watermark" href="#">https://blog.csdn.net/baidu_39521615</a>
</body>
</html>
```
FILE: styles.css
```css
:root {
  --ui: "Noto Sans", "Noto Sans CJK SC", sans-serif;
  --edge: #262626;
  --panel: #404040;
  --head: #4c4c4c;
  --list: #3a3a3a;
  --field: #2c2c2c;
  --blue: #6084a6;
}
* { box-sizing: border-box; }
body {
  margin: 0;
  display: grid;
  grid-template-rows: 29px 30px minmax(0, 1fr) 25px;
  height: 100vh;
  overflow: hidden;
  position: relative;
  background: #333;
  border-left: 2px solid #4c3520;
  color: #e2e2e2;
  font: 13px/18px var(--ui);
}
h1, h2, h3, p, ul, dl, dd { margin: 0; padding: 0; font-size: 13px; font-weight: 400; }
ul { list-style: none; }
a { color: inherit; text-decoration: none; }
button, input, select { font: inherit; color: inherit; margin: 0; padding: 0; border: 0; background: none; }
svg { flex: none; display: block; }
.sprite { position: absolute; width: 0; height: 0; }
.zh { font-size: 14px; }
.zh .en { font-size: 13px; }

/* small triangles */
.caret, .up, .down, .sort { display: block; flex: none; width: 0; height: 0; border: solid transparent; border-width: 6px 5px 0; border-top-color: #fff; }
.caret.small { border-width: 6px 4px 0; }
.down { border-top-color: #8a8a8a; }
.up { border-width: 0 5px 6px; border-bottom-color: #8a8a8a; }
.sort { display: inline-block; border-width: 0 4px 5px; border-bottom-color: #1c1c1c; margin: 0 0 3px 2px; }
.arrow { display: block; border: solid transparent; border-width: 4px 0 4px 5px; border-left-color: #fff; width: 0; height: 0; }
.arrow.back { border-width: 4px 5px 4px 0; border-right-color: #8a8a8a; }
.open { display: block; width: 0; height: 0; border: solid transparent; border-width: 0 0 6px 6px; border-bottom-color: #fff; }

/* title and menu bars */
.titlebar { display: grid; grid-template-columns: 1fr auto 1fr; background: #474747; border-bottom: 1px solid #2a2a2a; align-items: start; }
.quick { display: flex; align-items: center; gap: 11px; height: 28px; padding-left: 4px; }
.quick svg:first-child { margin-right: 4px; }
.titlebar h1 { font-size: 15px; line-height: 28px; margin-right: 106px; }
.win { display: flex; justify-content: flex-end; align-items: center; padding-right: 18px; gap: 35px; }
.win .bare { padding: 8px 0 4px; }
.field { display: flex; align-items: center; gap: 6px; height: 27px; padding: 0 6px; background: var(--field); border: 1px solid #222; border-radius: 4px; }
.field.zh { gap: 4px; padding-left: 5px; }
.field input { flex: 1; min-width: 0; outline: 0; }
.top-search { width: 150px; height: 24px; margin-right: -12px; }
.menubar { display: flex; background: var(--panel); font-size: 15px; line-height: 30px; padding-left: 9px; gap: 17px; }
.account { margin-left: auto; display: flex; align-items: center; gap: 10px; padding-right: 8px; }
.user { display: flex; align-items: center; gap: 5px; }

/* workspace */
.workspace { display: grid; grid-template-columns: 328px minmax(0, 1fr) 343px; gap: 4px; padding: 3px 3px 4px 2px; min-height: 0; }
.left, .right, .center { display: flex; flex-direction: column; min-height: 0; }
.panel { background: var(--panel); display: flex; flex-direction: column; min-height: 0; }
.panel-head { display: flex; align-items: center; gap: 11px; height: 29px; flex: none; padding: 0 9px 0 6px; background: var(--head); }
.panel-head h2 { flex: 1; font-size: 14px; font-weight: 600; }
.props .panel-head { padding-right: 5px; }
.tabs { display: flex; height: 27px; flex: none; }
.tabs a { padding: 4px 8px; border: 1px solid var(--edge); border-left-width: 0; border-radius: 0 0 4px 4px; background: #373737; }
.tabs a.on { background: var(--panel); border-top: 0; border-left-width: 1px; padding-top: 5px; }

.btn { display: flex; align-items: center; justify-content: center; gap: 4px; background: #4e4e4e; border: 1px solid #232323; border-radius: 4px; color: #fff; }
.select { position: relative; display: flex; align-items: center; height: 26px; border: 1px solid #232323; border-radius: 4px; background: linear-gradient(#5a5a5a, #4a4a4a); }
.select select { appearance: none; width: 100%; height: 100%; padding-left: 5px; outline: 0; font-size: 13px; }
.select::after { content: ""; position: absolute; right: 4px; border: solid transparent; border-width: 5px 4px 0; border-top-color: #fff; pointer-events: none; }
input[type="checkbox"] { appearance: none; display: inline-grid; place-items: center; width: 16px; height: 16px; border: 1px solid #222; border-radius: 4px; background: #484848; }
input[type="checkbox"]:checked::before { content: ""; width: 7px; height: 4px; border: solid #ddd; border-width: 0 0 1px 1px; transform: rotate(-45deg); margin-bottom: 3px; }

.pcb-panel { flex: 1; }
.pcb-body { flex: 1; display: flex; flex-direction: column; padding: 11px 11px 10px 10px; min-height: 0; }
.actions { display: flex; gap: 3px; margin: 9px 0 6px; }
.actions .btn { width: 79px; height: 29px; }
.actions .wide { width: 123px; gap: 7px; }
.blue { color: #8fb4e2; }
.options { display: flex; align-items: center; height: 26px; margin-bottom: 4px; }
.options label { display: flex; align-items: center; gap: 3px; white-space: nowrap; margin-right: 7px; }
.normal { width: 80px; margin-right: 15px; }
.box { flex: 179 1 0; min-height: 0; overflow: hidden; border: 1px solid var(--edge); background: var(--list); margin-bottom: 7px; }
.box h3 { height: 24px; line-height: 23px; padding-left: 2px; background: linear-gradient(#4a4a4a, #444); border-bottom: 1px solid var(--edge); }
.classes li { height: 23px; line-height: 22px; padding-left: 3px; border-bottom: 1px solid #333; color: #aaa; }
.classes .on { background: #555; color: #e8e8e8; }
.grid { width: 100%; table-layout: fixed; border-collapse: collapse; }
.grid th { height: 23px; padding: 0 0 0 3px; line-height: 18px; text-align: left; font-weight: 400; background: #444; border-bottom: 1px solid var(--edge); border-right: 1px solid var(--edge); white-space: nowrap; overflow: hidden; }
.grid td { height: 23px; padding: 0 0 0 3px; border: 1px solid #333; }
.grid .tick { background: #fff; padding: 3px 6px 0; line-height: 0; }
.c29 { width: 30px; } .c100 { width: 100px; } .c25 { width: 25px; } .c38 { width: 38px; } .c44 { width: 44px; } .c64 { width: 64px; } .c45 { width: 45px; } .c150 { width: 150px; }
.minimap { flex: 253 1 0; margin-bottom: 0; background: linear-gradient(#4a4a4a, #050505 90%); }
.minimap svg { width: 100%; height: 100%; }

/* documents */
.docs { display: flex; height: 31px; flex: none; padding-left: 5px; }
.docs a { display: flex; align-items: center; gap: 4px; padding-right: 9px; white-space: nowrap; }
.docs .on { background: #4e4e4e; border: 1px solid var(--edge); border-radius: 4px 4px 0 0; border-bottom: 0; padding: 0 5px 0 4px; margin-left: -4px; }
.canvas { flex: 1; position: relative; overflow: hidden; min-height: 0; background: #000; }
.board { width: 100%; height: 100%; }
.board text { font-family: "Liberation Sans", sans-serif; text-anchor: middle; fill: #ffe28c; stroke: #ffe28c; stroke-width: .5px; }
.board .pad-s text { font-size: 19px; }
.board .pad-m text { font-size: 21px; }
.board .pad-l text { font-size: 36px; }
.board .pad-y { font-size: 32px; fill: #ff0; stroke: #ff0; text-anchor: start; }
.tools { position: absolute; top: 3px; left: 387px; display: flex; padding: 0 5px; height: 32px; background: #404040; border-radius: 3px; }
.tools button { position: relative; width: 32px; height: 32px; display: grid; place-items: center; }
.tools svg { width: 16px; height: 16px; }
.tools .ice { color: #a9d8e4; }
.tools .more::after { content: ""; position: absolute; right: 2px; bottom: 1px; border: solid transparent; border-width: 0 0 5px 5px; border-bottom-color: #ccc; }
.tools .bar { border-left: 1px solid #222; }
.ten { font: 9px "Liberation Sans", sans-serif; fill: #ccc; text-anchor: middle; }
.letter { font: bold 19px "Liberation Serif", serif; color: #4b93e6; }
.layers { display: flex; height: 26px; flex: none; padding-left: 4px; }
.layers a { flex: auto; display: flex; align-items: center; gap: 12px; padding: 0 6px 0 8px; border: 1px solid var(--edge); border-width: 0 1px 1px 0; border-radius: 0 0 4px 4px; background: #373737; white-space: nowrap; }
.layers .on { background: #505050; font-weight: 700; color: #fff; }
.ls { display: flex; align-items: center; width: 56px; height: 18px; margin: 3px 5px 0 0; gap: 6px; border: 1px solid #222; border-radius: 3px; background: #484848; }
.ls i { width: 31px; height: 16px; background: red; }
.steps { display: flex; width: 52px; margin-right: 4px; border: 1px solid #222; border-radius: 3px; background: #4a4a4a; }
.steps button { flex: 1; display: grid; place-items: center; }
.steps button + button { border-left: 1px solid #222; }
.sw { width: 13px; height: 13px; border: 1px solid #aaa; }
.red { background: red; } .blu { background: #00f; } .mag { background: #f0f; } .grn { background: green; } .yel { background: #ff0; } .olv { background: olive; } .gry { background: gray; } .mar { background: maroon; }

/* components panel */
.comp-body { padding: 13px 10px 12px; }
.lib { display: flex; gap: 10px; margin-bottom: 11px; }
.lib .btn { width: 35px; height: 30px; }
.lib .dim { background: #444; border-color: #333; }
.lib-select { flex: 1; height: 30px; padding-left: 8px; }
.lib-select::after { border-width: 6px 5px 0; right: 6px; }
.field.big { height: 31px; padding: 0 6px 0 10px; gap: 9px; }
.list { display: grid; grid-template-columns: minmax(0, 1fr) 20px; margin-top: 10px; border: 1px solid var(--edge); border-bottom: 0; background: var(--list); }
.parts { width: 100%; table-layout: fixed; border-collapse: collapse; }
.parts th { height: 25px; padding: 0 0 0 12px; text-align: left; font-weight: 400; background: #444; border-bottom: 1px solid var(--edge); border-right: 1px solid #222; }
.parts td { height: 22px; padding: 0 0 0 8px; white-space: nowrap; }
.parts td:first-child { display: flex; align-items: center; gap: 10px; padding-left: 4px; }
.parts td svg { width: 18px; height: 18px; }
.parts .on { background: #4d5e72; color: #fff; }
.vbar { display: flex; flex-direction: column; align-items: center; }
.vbar b { width: 7px; border-radius: 4px; background: #808080; }
.vbar .down { margin-top: auto; }
.list .vbar { padding: 32px 0 9px; }
.list .vbar b { height: 40px; margin-top: 7px; }
.hbar { grid-column: 1 / -1; display: flex; align-items: center; height: 16px; padding: 0 28px 0 7px; }
.hbar b { width: 176px; height: 7px; margin-left: 8px; border-radius: 4px; background: #808080; }
.hbar .arrow:last-child { margin-left: auto; border-left-color: #8a8a8a; }
.results { height: 30px; line-height: 30px; padding-left: 10px; background: #474747; border: 1px solid var(--edge); border-top: 0; color: #8c8c8c; }
.detail { margin-top: 10px; border: 1px solid var(--edge); }
.detail p { display: flex; align-items: center; justify-content: space-between; height: 33px; padding: 0 20px 0 10px; background: #474747; border-bottom: 1px solid var(--edge); }
.preview { display: flex; align-items: center; gap: 14px; height: 35px; padding: 0 4px 0 10px; }
.preview b { flex: 1; height: 15px; background: #474747; }
.preview span { display: grid; gap: 12px; }
.right .tabs { height: 26px; margin-bottom: 6px; }

/* properties panel */
.props { flex: 1; }
.props-body { flex: 1; display: flex; flex-direction: column; padding: 10px 10px 0; min-height: 0; }
.board-row { display: flex; align-items: center; justify-content: space-between; margin-bottom: 11px; }
.board-row span:nth-child(2) { margin-left: auto; margin-right: 7px; }
.split { display: flex; width: 55px; height: 34px; border: 1px solid #222; border-radius: 4px; background: #505050; overflow: hidden; color: #fff; }
.split button { display: grid; place-items: center; width: 18px; }
.split button:first-child { width: 36px; background: var(--blue); border-right: 1px solid #222; }
.props .field { height: 28px; padding-left: 9px; gap: 8px; flex: none; }
.scroll { flex: 1; display: flex; gap: 5px; min-height: 0; padding-top: 14px; margin-right: -4px; }
.groups { flex: 1; display: flex; flex-direction: column; padding-top: 13px; min-height: 0; }
.groups h3 { display: flex; align-items: center; gap: 5px; color: #fff; font-weight: 700; }
.groups .snap { margin-top: 19px; }
.group { display: flex; flex-direction: column; gap: 7px; margin-top: 8px; padding: 7px 8px 10px 9px; background: #464646; border-radius: 4px; }
.group > div { display: flex; gap: 6px; }
.group.last { flex: 1; margin-top: 7px; padding-bottom: 0; border-radius: 4px 4px 0 0; }
.group p { display: flex; justify-content: space-between; color: #999; }
.group p b { color: #fff; font-weight: 700; }
.chip { height: 30px; padding: 0 10px; border: 1px solid #3b566f; border-radius: 4px; background: var(--blue); color: #f2f2f2; }
.chip.off { background: #4f4f4f; border-color: #232323; }
.chip.allon { width: 95px; height: 32px; }
.scroll .vbar { width: 12px; padding-bottom: 9px; }
.scroll .vbar b { height: 45px; margin-top: 7px; }
.nothing { height: 18px; line-height: 20px; margin-left: -5px; }

.status { background: var(--panel); padding-left: 5px; line-height: 25px; }

/* rules dialog */
.dialog { position: absolute; left: 245px; right: 554px; top: 137px; bottom: 129px; display: flex; flex-direction: column; padding: 0 8px 7px; background: var(--head); border: 1px solid #1f1f1f; }
.dialog > header { display: grid; grid-template-columns: 1fr auto 1fr; height: 37px; align-items: start; }
.dialog > header h2 { grid-column: 2; line-height: 36px; font-size: 15px; margin-right: 57px; }
.close { justify-self: end; width: 46px; height: 28px; display: grid; place-items: center; background: #a00000; }
.dialog-main { flex: 1; display: flex; gap: 10px; padding: 9px; min-height: 0; border: 1px solid #303030; background: var(--panel); }
.tree-col { width: 313px; flex: none; display: flex; flex-direction: column; gap: 10px; min-height: 0; }
.tree-box { flex: 1; display: flex; min-height: 0; overflow: hidden; border: 1px solid var(--edge); background: var(--list); }
.tree { flex: 1; padding-right: 1px; }
.tree li { display: flex; align-items: center; height: 22px; }
.tree li > i:first-child { margin-right: 10px; }
.tree li > i:not([class]) { width: 5px; }
.tree li > .open:first-child { margin-right: 9px; }
.tree svg { width: 16px; height: 16px; }
.tree span { line-height: 22px; padding-left: 1px; }
.l1 { padding-left: 33px; } .l2 { padding-left: 57px; } .l3 { padding-left: 81px; }
.tree .on span { flex: 1; background: #555; color: #fff; }
.tree-box .vbar { width: 12px; margin-right: 2px; padding: 5px 0; }
.tree-box .vbar b { height: 533px; margin-top: 57px; }
.rule { flex: 1; min-width: 0; border: 1px solid var(--edge); padding: 18px; }
.rule-row { display: flex; align-items: center; }
.rule-row input { height: 27px; flex: none; padding: 0 6px; background: var(--field); border: 1px solid #222; border-radius: 4px; }
.rule-row .btn { height: 31px; }
.test { flex: 1; margin-left: 10px; }
.rule-row label { flex: none; padding-top: 4px; }
.rule-row input + label { padding-left: 10px; }
.w50 { width: 50px; } .w213 { width: 213px; } .w81 { width: 81px; } .w66 { width: 66px; } .w90 { width: 90px; } .w116 { width: 116px; }
.rule h3 { height: 28px; line-height: 28px; margin-top: 10px; padding-left: 8px; background: #4b4b4b; color: #fff; font-weight: 700; }
.rule h3.zh { font-size: 15px; }
.all { width: 131px; margin: 10px 0 0 20px; }
.constraint { padding: 14px 0 0 20px; }
.pref { display: block; padding-left: 5px; color: #9db7d3; }
.via { display: flex; margin-top: 10px; }
.via svg { margin-top: 2px; }
.via dl { display: grid; grid-template-columns: 70px 44px; row-gap: 11px; align-content: start; font-size: 14px; line-height: 18px; }
.via dd { color: #9db7d3; }
.via .cap { grid-column: 1 / -1; font-weight: 700; font-size: 15px; margin-bottom: -8px; white-space: nowrap; }
.dia { margin-top: 14px; }
.hole { margin: 106px 0 0 13px; }
.dialog > footer { display: flex; gap: 10px; padding-top: 9px; }
.dialog > footer .btn { display: block; height: 31px; }
.push { flex: 1; }
.w121 { width: 121px; } .w122 { width: 122px; } .w156 { width: 156px; } .w94 { width: 94px; }
.dialog .primary { border-color: #8ebbe9; }

/* overlays */
.marks { position: absolute; left: -2px; top: 0; width: 1920px; height: 1080px; pointer-events: none; }
.meter { position: absolute; right: 0; top: 857px; width: 13px; height: 73px; padding: 8px 3px 8px 4px; background: #2b3144; border: 1px solid #1a1e2a; border-right: 0; border-radius: 5px 0 0 5px; }
.meter b { display: block; height: 100%; background: repeating-linear-gradient(transparent 0 1px, #2b3144 1px 3px), linear-gradient(#555d70 35%, #c8c832 36%, #3fc9a0); }
.watermark { position: absolute; right: 10px; bottom: 8px; font: 16px/22px "Liberation Sans", sans-serif; color: #c4c4c4; }
```
